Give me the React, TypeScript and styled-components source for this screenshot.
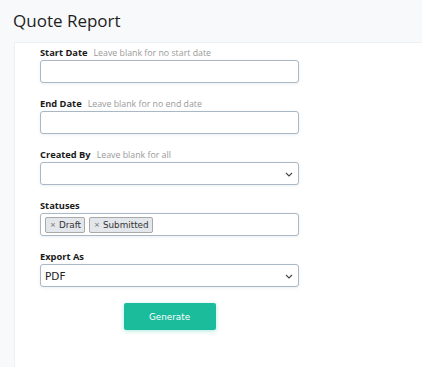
import React from "react";
import styled, { createGlobalStyle } from "styled-components";

const Global = createGlobalStyle`
  html, body { margin: 0; padding: 0; background: #f8f9fb; }
  body { font-family: "Open Sans", "Liberation Sans", sans-serif; color: #222; }
  * { box-sizing: border-box; }
`;

const Page = styled.div`
  width: 422px;
  height: 367px;
  overflow: hidden;
  background: #f8f9fb;
`;

const Title = styled.h1`
  margin: 0;
  padding: 9px 0 0 13px;
  height: 42px;
  font-size: 17px;
  font-weight: 500;
  color: #1e1e1e;
`;

const Card = styled.div`
  margin-left: 14px;
  background: #fff;
  border-top: 1px solid #eef0f3;
  border-left: 1px solid #eef0f3;
  height: 340px;
  padding: 3px 0 0 25px;
`;

const Form = styled.div`
  width: 259px;
  display: flex;
  flex-direction: column;
  gap: 14px;
`;

const Field = styled.div`
  display: flex;
  flex-direction: column;
`;

const LabelRow = styled.div`
  display: flex;
  align-items: baseline;
  gap: 6px;
  height: 14px;
  line-height: 14px;
`;

const Label = styled.span`
  font-size: 9.3px;
  font-weight: 700;
  color: #1a1a1a;
`;

const Hint = styled.span`
  font-size: 8.8px;
  color: #9a9a9a;
`;

const Box = styled.div`
  position: relative;
  height: 23px;
  border: 1px solid #a9b8c4;
  border-radius: 3px;
  background: #fff;
  box-shadow: 0 1px 3px rgba(120, 140, 160, 0.15);
  display: flex;
  align-items: center;
  padding: 0 4px;
  font-family: "DejaVu Sans", "Liberation Sans", sans-serif;
  font-size: 10px;
  color: #222;
`;

const Value = styled.span`
  font-size: 10.5px;
`;

const Chevron = styled.svg`
  position: absolute;
  right: 5px;
  top: 9px;
`;

const Tags = styled.div`
  display: flex;
  gap: 4px;
`;

const Tag = styled.span`
  display: inline-flex;
  align-items: center;
  gap: 3px;
  height: 16px;
  padding: 0 3px 0 4px;
  border: 1px solid #a9a9a9;
  border-radius: 2px;
  background: #e3e6ea;
  font-family: "DejaVu Sans", "Liberation Sans", sans-serif;
  font-size: 8.8px;
  color: #333;
`;

const X = styled.span`
  font-size: 7px;
  color: #888;
  font-weight: 700;
`;

const ButtonRow = styled.div`
  display: flex;
  justify-content: center;
  padding-top: 2px;
`;

const Button = styled.button`
  width: 92px;
  height: 27px;
  border: none;
  border-radius: 2px;
  background: #1abc9c;
  color: #fff;
  font-family: "DejaVu Sans", "Liberation Sans", sans-serif;
  font-size: 8.8px;
  box-shadow: 0 1px 4px rgba(26, 188, 156, 0.35);
`;

const ChevronIcon = () => (
  <Chevron width="8" height="5" viewBox="0 0 8 5">
    <path d="M1 1 L4 4 L7 1" fill="none" stroke="#444" strokeWidth="1.1" />
  </Chevron>
);

export default function App() {
  return (
    <Page>
      <Global />
      <Title>Quote Report</Title>
      <Card>
        <Form>
          <Field>
            <LabelRow>
              <Label>Start Date</Label>
              <Hint>Leave blank for no start date</Hint>
            </LabelRow>
            <Box />
          </Field>
          <Field>
            <LabelRow>
              <Label>End Date</Label>
              <Hint>Leave blank for no end date</Hint>
            </LabelRow>
            <Box />
          </Field>
          <Field>
            <LabelRow>
              <Label>Created By</Label>
              <Hint>Leave blank for all</Hint>
            </LabelRow>
            <Box>
              <ChevronIcon />
            </Box>
          </Field>
          <Field>
            <LabelRow>
              <Label>Statuses</Label>
            </LabelRow>
            <Box>
              <Tags>
                <Tag>
                  <X>×</X>Draft
                </Tag>
                <Tag>
                  <X>×</X>Submitted
                </Tag>
              </Tags>
            </Box>
          </Field>
          <Field>
            <LabelRow>
              <Label>Export As</Label>
            </LabelRow>
            <Box>
              <Value>PDF</Value>
              <ChevronIcon />
            </Box>
          </Field>
          <ButtonRow>
            <Button>Generate</Button>
          </ButtonRow>
        </Form>
      </Card>
    </Page>
  );
}
